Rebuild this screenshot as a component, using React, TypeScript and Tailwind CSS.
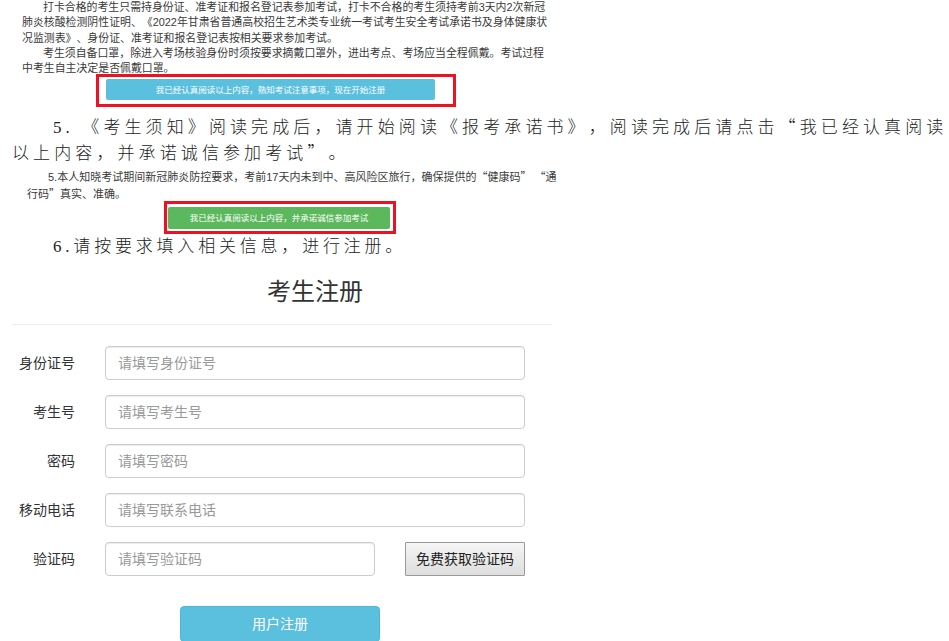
const sans = "font-['Liberation_Sans','Noto_Sans_CJK_SC',sans-serif]";
const serif = "font-['Liberation_Serif','Noto_Sans_CJK_SC',serif]";

const fields = [
  { label: "身份证号", placeholder: "请填写身份证号" },
  { label: "考生号", placeholder: "请填写考生号" },
  { label: "密码", placeholder: "请填写密码" },
  { label: "移动电话", placeholder: "请填写联系电话" },
];

// curly quotes have to come from the CJK font to be full width
function Q({ children }: { children: string }) {
  return <span className="font-['Noto_Sans_CJK_SC',sans-serif]">{children}</span>;
}

function Field({ label, placeholder }: { label: string; placeholder: string }) {
  return (
    <div className="flex items-center h-[34px] mb-[15px]">
      <label className="w-[75px] shrink-0 text-right text-[14px] text-[#333]">{label}</label>
      <input
        placeholder={placeholder}
        className="ml-[30px] w-[420px] h-[34px] px-3 text-[14px] bg-white border border-[#ccc] rounded-[4px] shadow-[inset_0_1px_1px_rgba(0,0,0,0.075)] placeholder:text-[#999]"
      />
    </div>
  );
}

export default function App() {
  return (
    <div className={`${sans} w-[949px] h-[641px] overflow-hidden bg-white text-[#333] [text-spacing-trim:space-all]`}>
      <div className="pl-[22px] text-[10.9px] leading-[15.3px] text-[#3a3a3a] whitespace-nowrap">
        <p className="pl-[21px]">打卡合格的考生只需持身份证、准考证和报名登记表参加考试，打卡不合格的考生须持考前3天内2次新冠</p>
        <p>肺炎核酸检测阴性证明、《2022年甘肃省普通高校招生艺术类专业统一考试考生安全考试承诺书及身体健康状</p>
        <p>况监测表》、身份证、准考证和报名登记表按相关要求参加考试。</p>
        <p className="pl-[21px]">考生须自备口罩，除进入考场核验身份时须按要求摘戴口罩外，进出考点、考场应当全程佩戴。考试过程</p>
        <p>中考生自主决定是否佩戴口罩。</p>
      </div>

      <div className="ml-[96px] mt-[-2px] w-[360px] h-[33px] border-[3px] border-[#ee1122]">
        <button className="block ml-[7px] mt-[2px] w-[329px] h-[21px] bg-[#5bc0de] rounded-[2px] text-white text-[8.5px]">
          我已经认真阅读以上内容，熟知考试注意事项，现在开始注册
        </button>
      </div>

      <div className={`${serif} mt-[7px] text-[17px] leading-[24px] tracking-[4.1px] text-[#222] font-light whitespace-nowrap pl-[12px]`}>
        <p className="pl-[41px]">5. 《考生须知》阅读完成后，请开始阅读《报考承诺书》，阅读完成后请点击<Q>“</Q>我已经认真阅读</p>
        <p>以上内容，并承诺诚信参加考试<Q>”</Q>。</p>
      </div>

      <div className="mt-[2px] pl-[27px] text-[11px] leading-[16px] text-[#3a3a3a] whitespace-nowrap">
        <p className="pl-[21px]">5.本人知晓考试期间新冠肺炎防控要求，考前17天内未到中、高风险区旅行，确保提供的<Q>“</Q>健康码<Q>”</Q> <Q>“</Q>通</p>
        <p>行码<Q>”</Q>真实、准确。</p>
      </div>

      <div className="ml-[164px] mt-[-1px] w-[232px] h-[33px] border-[3px] border-[#ee1122]">
        <button className="block ml-[1px] mt-[3px] w-[222px] h-[22px] bg-[#5cb85c] rounded-[2px] text-white text-[8.5px]">
          我已经认真阅读以上内容，并承诺诚信参加考试
        </button>
      </div>

      <p className={`${serif} pl-[53px] text-[17px] leading-[26px] tracking-[3.8px] text-[#222] font-light`}>
        6.请按要求填入相关信息，进行注册。
      </p>

      <div className="w-[540px] ml-[12px]">
        <h1 className="mt-[15px] pl-[66px] text-center text-[24px] leading-[34px] font-normal text-[#333]">考生注册</h1>
        <hr className="mt-[15px] border-t border-[#eee]" />
      </div>

      <div className="mt-[21px] w-[540px]">
        {fields.map((f) => (
          <Field key={f.label} label={f.label} placeholder={f.placeholder} />
        ))}
        <div className="flex items-center h-[34px]">
          <label className="w-[75px] shrink-0 text-right text-[14px] text-[#333]">验证码</label>
          <input
            placeholder="请填写验证码"
            className="ml-[30px] w-[270px] h-[34px] px-3 text-[14px] bg-white border border-[#ccc] rounded-[4px] shadow-[inset_0_1px_1px_rgba(0,0,0,0.075)] placeholder:text-[#999]"
          />
          <button className="ml-[30px] w-[120px] h-[34px] text-[14px] text-[#222] border border-[#999] rounded-[1px] bg-gradient-to-b from-[#f5f5f5] to-[#dedede]">
            免费获取验证码
          </button>
        </div>
        <button className="block mt-[30px] ml-[180px] w-[200px] h-[36px] bg-[#5bc0de] border border-[#46b8da] rounded-[4px] text-white text-[14px]">
          用户注册
        </button>
      </div>
    </div>
  );
}
